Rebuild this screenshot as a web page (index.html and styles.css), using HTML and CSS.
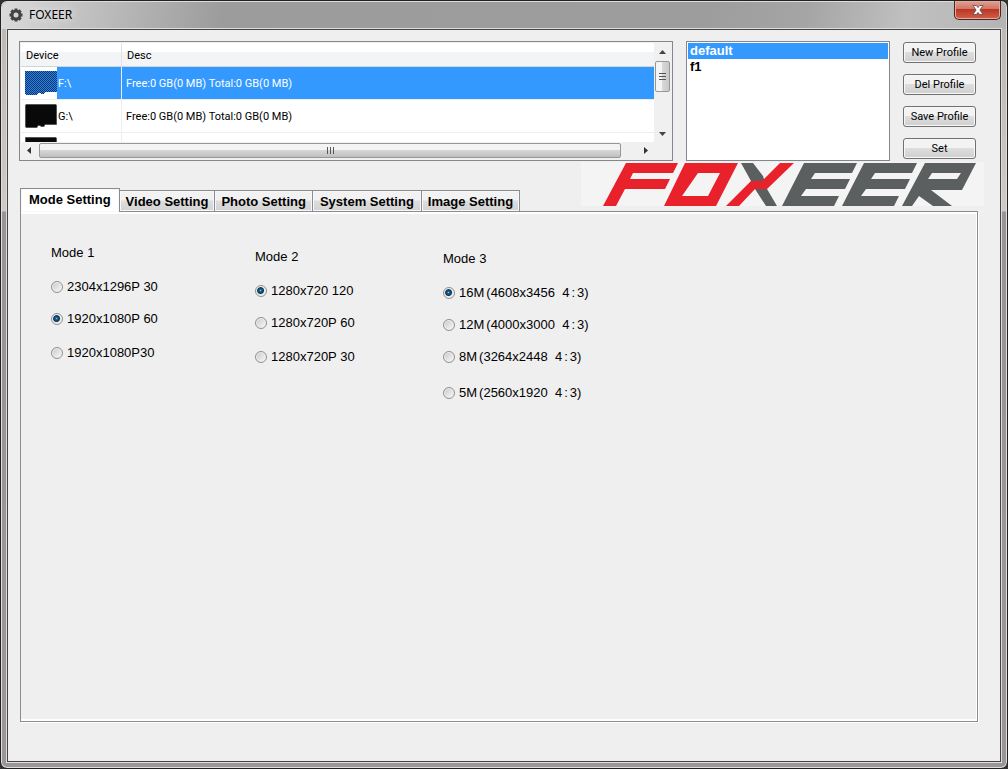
FILE: index.html
```
<!DOCTYPE html>
<html lang="en">
<head>
<meta charset="utf-8">
<title>FOXEER</title>
<link rel="stylesheet" href="styles.css">
</head>
<body>
<div class="window">
  <header class="titlebar">
    <svg class="gear" viewBox="0 0 14 14" aria-hidden="true">
      <circle cx="7" cy="7" r="4" fill="none" stroke="#444" stroke-width="3"/>
      <path d="M7 .5v2M7 11.5v2M.5 7h2M11.500 7h2M2.400 2.400l1.400 1.400M10.200 10.200l1.400 1.400M11.600 2.400l-1.400 1.400M3.800 10.200l-1.400 1.400" stroke="#444" stroke-width="3"/>
    </svg>
    <h1 class="title">FOXEER</h1>
    <button class="close" aria-label="Close">
      <svg viewBox="0 0 12 10" width="12" height="10" aria-hidden="true"><path d="M1 .5h3.300L6 2.600 7.700.500H11L7.900 5 11 9.500H7.700L6 7.400 4.300 9.500H1L4.100 5z" fill="#fff" stroke="#5b4a50" stroke-width=".8"/></svg>
    </button>
  </header>
  <main class="client">
    <section class="top">
      <div class="devices">
        <div class="viewport">
          <table class="table">
            <thead><tr><th class="dev">Device</th><th>Desc</th></tr></thead>
            <tbody>
              <tr class="selected">
                <td class="drive"><div class="cell"><svg class="card" viewBox="0 0 32 24" shape-rendering="crispEdges" aria-hidden="true"><defs><pattern id="dots" width="2" height="2" patternUnits="userSpaceOnUse"><path d="M0 0h2v2H0z" fill="#3399ff"/><path d="M0 0h1v1H0zM1 1h1v1H1z" fill="#081c3c"/></pattern></defs><path d="M0 0h32v21h-12l-1 2h-3l-1-1h-2l-1 2H1l-1-1z" fill="#1a5cb8"/><path d="M0 0h32v21h-12l-1 2h-3l-1-1h-2l-1 2H1l-1-1z" fill="url(#dots)" opacity=".6"/></svg><span class="letter">F:\</span></div></td>
                <td class="info">Free:0 GB(0 MB) Total:0 GB(0 MB)</td>
              </tr>
              <tr>
                <td class="drive"><div class="cell"><svg class="card" viewBox="0 0 32 24" aria-hidden="true"><path d="M1 .5h30l.5 1v19H20l-1 2h-3l-1-1h-2l-1 2H1l-.5-1v-21z" fill="#090909" stroke="#555"/></svg><span class="letter">G:\</span></div></td>
                <td class="info">Free:0 GB(0 MB) Total:0 GB(0 MB)</td>
              </tr>
              <tr>
                <td class="drive"><div class="cell"><svg class="card" viewBox="0 0 32 24" aria-hidden="true"><path d="M1 .5h30l.5 1v19H20l-1 2H1l-.5-1v-21z" fill="#090909" stroke="#555"/></svg></div></td>
                <td class="info"></td>
              </tr>
            </tbody>
          </table>
        </div>
        <div class="vscroll">
          <span class="arrow"><svg width="7" height="4" viewBox="0 0 7 4"><path d="M0 4L3.500 0 7 4z" fill="#444"/></svg></span>
          <span class="vthumb"><svg width="7" height="9" viewBox="0 0 7 9"><path d="M0 1.500h7M0 4.500h7M0 7.500h7" stroke="#555"/></svg></span>
          <span class="arrow last"><svg width="7" height="4" viewBox="0 0 7 4"><path d="M0 0L3.500 4 7 0z" fill="#444"/></svg></span>
        </div>
        <div class="hscroll">
          <span class="arrow"><svg width="4" height="7" viewBox="0 0 4 7"><path d="M4 0L0 3.500 4 7z" fill="#333"/></svg></span>
          <span class="hthumb"><svg width="9" height="7" viewBox="0 0 9 7"><path d="M1.500 0v7M4.500 0v7M7.500 0v7" stroke="#555"/></svg></span>
          <span class="arrow last"><svg width="4" height="7" viewBox="0 0 4 7"><path d="M0 0L4 3.500 0 7z" fill="#333"/></svg></span>
        </div>
      </div>
      <select class="profiles" size="7" aria-label="Profiles">
        <option class="current">default</option>
        <option>f1</option>
      </select>
      <div class="actions">
        <button class="btn">New Profile</button>
        <button class="btn">Del Profile</button>
        <button class="btn">Save Profile</button>
        <button class="btn">Set</button>
      </div>
    </section>
    <div class="bar">
      <nav class="tabs" role="tablist">
        <button class="tab active" role="tab" aria-selected="true">Mode Setting</button>
        <button class="tab" role="tab">Video Setting</button>
        <button class="tab" role="tab">Photo Setting</button>
        <button class="tab wide" role="tab">System Setting</button>
        <button class="tab" role="tab">Image Setting</button>
      </nav>
      <svg class="logo" viewBox="0 0 403 44" role="img" aria-label="Foxeer">
        <path d="M0 0h403v44H0z" fill="#f4f4f4"/>
        <g fill="#e8212a">
          <path d="M45 1h52l-5 10H52l-3 6h40l-5 10H44l-9 17H22z"/>
          <path fill-rule="evenodd" d="M104 1h53l-22 43H83zM117 11h22l-12 23h-26z"/>
        </g>
        <path d="M160 1h12l10 13 4 13 10 17h-11l-11-17-4-8z" fill="#5b5f5f"/>
        <path d="M199 1h14l-27 26h-12l-16 17h-13l25-25h11z" fill="#e8212a"/>
        <g fill="#5b5f5f">
          <path d="M223 1h53l-5 10h-37l-4 6h39l-5 10h-39l-5 7h38l-5 10h-52z"/>
          <path d="M283 1h53l-5 10h-37l-4 6h39l-5 10h-39l-5 7h38l-5 10h-52z"/>
          <path fill-rule="evenodd" d="M344 1h51l-14 27h-31l21 16h-19l-14-10-7 10h-10zM351 11h29l-4 6h-29z"/>
        </g>
      </svg>
    </div>
    <section class="panel">
      <fieldset class="group g1">
        <legend class="legend">Mode 1</legend>
        <label class="opt"><input type="radio" name="m1">2304x1296P 30</label>
        <label class="opt"><input type="radio" name="m1" checked>1920x1080P 60</label>
        <label class="opt far"><input type="radio" name="m1">1920x1080P30</label>
      </fieldset>
      <fieldset class="group g2">
        <legend class="legend">Mode 2</legend>
        <label class="opt"><input type="radio" name="m2" checked>1280x720 120</label>
        <label class="opt"><input type="radio" name="m2">1280x720P 60</label>
        <label class="opt far"><input type="radio" name="m2">1280x720P 30</label>
      </fieldset>
      <fieldset class="group g3">
        <legend class="legend">Mode 3</legend>
        <label class="opt"><input type="radio" name="m3" checked>16M<span class="open">(</span>4608x3456 &nbsp;4<span class="colon">:</span>3)</label>
        <label class="opt"><input type="radio" name="m3">12M<span class="open">(</span>4000x3000 &nbsp;4<span class="colon">:</span>3)</label>
        <label class="opt"><input type="radio" name="m3">8M<span class="open">(</span>3264x2448 &nbsp;4<span class="colon">:</span>3)</label>
        <label class="opt farther"><input type="radio" name="m3">5M<span class="open">(</span>2560x1920 &nbsp;4<span class="colon">:</span>3)</label>
      </fieldset>
    </section>
  </main>
</div>
</body>
</html>
```
FILE: styles.css
```
* { box-sizing: border-box; }
body {
  margin: 0;
  background: #333;
  color: #000;
  font: 11px/16px Roboto, "Noto Sans", sans-serif;
}
button, select, input { font: inherit; color: inherit; }
.window {
  display: flex;
  flex-direction: column;
  min-height: 100vh;
  padding: 0 6px 6px;
  border: 1px solid #222;
  border-radius: 7px;
  background: linear-gradient(#bbb5b3 0, #cfcac8 210px, #989494 211px, #9b9797 100%);
  box-shadow: inset 0 0 0 1px #ddd;
}
.titlebar {
  display: flex;
  align-items: flex-start;
  height: 27px;
  margin: 1px -5px 0;
  padding-left: 7px;
  border-radius: 6px 6px 0 0;
  background: linear-gradient(100deg, #dadada 0, #c2c2c2 8%, #9c9c9c 22%, #9d9d9d 70%, #a5a5a5 80%, #c0c0c0 90%, #b4b4b4 100%);
}
.gear { width: 14px; height: 14px; margin-top: 6px; }
.title {
  margin: 5px 0 0 6px;
  font: 12px/16px "Noto Sans", "Open Sans", sans-serif;
  text-shadow: 0 0 8px #fff;
}
.close {
  display: flex;
  align-items: center;
  justify-content: center;
  width: 47px;
  height: 19px;
  margin: -1px 5px 0 auto;
  padding: 0;
  border: 1px solid #4c2420;
  border-top: 0;
  border-radius: 0 0 5px 5px;
  background: linear-gradient(#e0a090 0, #cf7565 45%, #b93523 46%, #d2604a 100%);
  box-shadow: inset 0 0 0 1px #e8a99c;
}
.client {
  flex: 1;
  display: flex;
  flex-direction: column;
  padding: 11px 16px 39px 11px;
  border: 1px solid #444;
  outline: 1px solid #ddd;
  background: #efefef;
}
.top { display: flex; padding-right: 8px; height: 120px; }
.devices {
  flex: 1;
  display: grid;
  grid-template-columns: 1fr 17px;
  grid-template-rows: 1fr 18px;
  padding: 1px;
  border: 1px solid #828790;
  background: #f0f0f0;
}
.viewport { overflow: hidden; height: 99px; background: #fff; }
.table {
  width: 100%;
  border-collapse: separate;
  border-spacing: 0;
  table-layout: fixed;
}
.table th {
  height: 24px;
  padding: 3px 5px 0;
  border-right: 1px solid #e2e3e5;
  border-bottom: 1px solid #d5d5d5;
  background: linear-gradient(#fff 40%, #f3f4f6 41%);
  text-align: left;
  font-weight: 400;
}
.table th:last-child { border-right: 0; }
.table .dev { width: 101px; }
.table td { height: 33px; padding: 0; border-bottom: 1px solid #eee; }
.cell { display: flex; height: 32px; align-items: center; border-right: 1px solid #eee; }
.table .info { padding-left: 4px; padding-top: 2px; }
.card { width: 32px; height: 24px; margin: 0 0 0 4px; }
.letter { flex: 1; padding: 9px 1px 7px; }
.selected { color: #fff; }
.selected .letter, .selected .info { background: #3399ff; }
.selected .info { background-clip: padding-box; }
.vscroll { display: flex; flex-direction: column; background: #f0f0f0; }
.hscroll { display: flex; background: #f0f0f0; }
.arrow { display: flex; flex: none; align-items: center; justify-content: center; width: 16px; height: 17px; }
.last { margin-top: auto; }
.hscroll .last { margin: 0 0 0 auto; }
.vthumb, .hthumb {
  display: flex;
  align-items: center;
  justify-content: center;
  border: 1px solid #979797;
  border-radius: 2px;
}
.vthumb { height: 31px; margin: 1px 1px 0; background: linear-gradient(90deg, #f5f5f5 45%, #d8d8d8 50%, #c8c8c8); }
.hthumb { width: 92%; height: 15px; margin: 1px 0 0 2px; background: linear-gradient(#f3f3f3 45%, #d6d6d6 50%, #c0c0c0); }
.profiles {
  width: 204px;
  margin: 0 13px;
  padding: 1px;
  border: 1px solid #828790;
  border-radius: 0;
  background: #fff;
  outline: 0;
  overflow: hidden;
}
.profiles option { min-height: 16px; padding: 0 2px; font: bold 13px/16px "Liberation Sans", Arial, sans-serif; }
.profiles .current { background: #3399ff; color: #fff; }
.actions { display: flex; flex-direction: column; justify-content: space-between; width: 73px; padding-top: 1px; margin-bottom: 2px; }
.btn {
  height: 21px;
  padding: 1px 0 0;
  border: 1px solid #707070;
  border-radius: 3px;
  background: linear-gradient(#f3f3f3 45%, #dedede 50%, #cfcfcf);
  box-shadow: inset 0 0 0 1px #f8f8f8;
  white-space: nowrap;
}
.bar { display: flex; align-items: flex-start; justify-content: space-between; height: 50px; padding: 1px 0 0 1px; }
.logo { width: 403px; height: 44px; }
.tabs { display: flex; align-items: flex-end; height: 49px; }
.tab {
  height: 21px;
  padding: 1px 6px 0;
  border: 1px solid #898c95;
  border-bottom: 0;
  border-right-width: 0;
  background: linear-gradient(#f2f2f2 45%, #dedede 50%, #d2d2d2);
  box-shadow: inset 0 0 0 1px #f8f8f8;
  font: bold 13px/18px "Liberation Sans", Arial, sans-serif;
  white-space: nowrap;
}
.tab.wide { padding: 1px 7px 0; }
.tab:last-child { border-right-width: 1px; }
.tab.active {
  height: 24px;
  padding: 0 8px 2px;
  margin-bottom: -1px;
  border-right-width: 1px;
  background: #fff;
  z-index: 1;
}
.tab.active + .tab { border-left: 0; }
.panel {
  flex: 1;
  display: flex;
  align-items: flex-start;
  margin: 0 6px 0 1px;
  padding: 28px;
  border: 1px solid #898c95;
  box-shadow: inset 0 2px #fff, inset -1px -2px #fff, 1px 1px #fff;
  font: 13px/18px "Liberation Sans", Arial, sans-serif;
}
.group {
  display: flex;
  flex-direction: column;
  min-width: 0;
  margin: 0;
  padding: 0;
  border: 0;
}
.g1 { width: 204px; margin-top: 4px; }
.g2 { width: 188px; margin-top: 8px; }
.g3 { margin-top: 10px; }
.legend { padding: 0 2px; margin-bottom: 16px; }
.opt { display: flex; align-items: center; height: 18px; margin-bottom: 14px; padding-left: 2px; white-space: pre; }
.opt.far { margin-top: 2px; }
.opt.farther { margin-top: 4px; }
.opt input {
  appearance: none;
  width: 12px;
  height: 12px;
  margin: 0 4px 0 0;
  border: 1px solid #8e8f8f;
  border-radius: 50%;
  background: linear-gradient(135deg, #c8c8c8, #fafafa);
  box-shadow: inset 0 0 0 1px #f2f2f2;
}
.opt input:checked { background: radial-gradient(circle at 45% 45%, #7fd0f0 0, #1b6899 1px, #0c3354 3px, #e8e8e8 4px); }
.open { padding-left: 2px; }
.colon { padding: 0 2px; }
```
